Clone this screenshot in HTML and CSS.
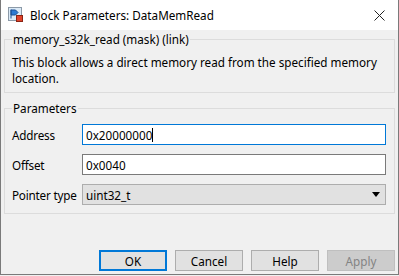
FILE: index.html
```html
<!DOCTYPE html>
<html lang="en">
<head>
    <meta charset="UTF-8">
    <title>Block Parameters: DataMemRead</title>
    <link rel="stylesheet" href="styles.css">
</head>
<body>
    <div class="window">
        <div class="title-bar">
            <svg class="app-icon" width="15" height="15" viewBox="0 0 15 15">
                <rect x="0.5" y="0.5" width="13" height="13" fill="#dbeaf7" stroke="#8c9aa8"/>
                <path d="M3 2.5 L3 11.5 M3 3 L7.5 3 L10 5.5 L7.5 8 L3 8 Z" fill="#2d7ad2" stroke="#1c4f91" stroke-width="1"/>
                <rect x="8.5" y="8.5" width="6" height="6" fill="#e0432b" stroke="#8a2414"/>
            </svg>
            <span class="title">Block Parameters: DataMemRead</span>
            <span class="close">
                <svg width="11" height="11" viewBox="0 0 11 11">
                    <path d="M0.5 0.5 L10.5 10.5 M10.5 0.5 L0.5 10.5" stroke="#222" stroke-width="1"/>
                </svg>
            </span>
        </div>
        <div class="content">
            <fieldset class="group">
                <legend>memory_s32k_read (mask) (link)</legend>
                <p class="description">This block allows a direct memory read from the specified memory location.</p>
            </fieldset>
            <fieldset class="group params">
                <legend>Parameters</legend>
                <div class="param-row">
                    <label>Address</label>
                    <div class="field focused">0x20000000<span class="caret"></span></div>
                </div>
                <div class="param-row">
                    <label>Offset</label>
                    <div class="field">0x0040</div>
                </div>
                <div class="param-row">
                    <label>Pointer type</label>
                    <div class="field select">
                        <span>uint32_t</span>
                        <svg width="8" height="5" viewBox="0 0 8 5"><path d="M0 0 L8 0 L4 5 Z" fill="#000"/></svg>
                    </div>
                </div>
            </fieldset>
            <div class="buttons">
                <button class="default">OK</button>
                <button>Cancel</button>
                <button>Help</button>
                <button class="disabled">Apply</button>
            </div>
        </div>
    </div>
</body>
</html>
```

FILE: styles.css
```css
* {
    margin: 0;
    padding: 0;
    box-sizing: border-box;
}

body {
    font-family: "Noto Sans", "Liberation Sans", sans-serif;
    font-size: 11.7px;
    color: #000;
    background: #f0f0f0;
}

.window {
    width: 399px;
    height: 275px;
    display: flex;
    flex-direction: column;
    border-left: 1px solid #7a7a7a;
    border-right: 1px solid #7a7a7a;
    border-bottom: 1px solid #7a7a7a;
}

.title-bar {
    height: 30px;
    background: #fff;
    display: flex;
    align-items: center;
    padding-left: 7px;
}

.app-icon {
    margin-right: 7px;
    margin-top: -1px;
}

.title {
    flex: 1;
}

.close {
    width: 30px;
    display: flex;
    justify-content: center;
    margin-right: 4px;
}

.content {
    flex: 1;
    display: flex;
    flex-direction: column;
    padding: 0 3px 3px 3px;
}

.group {
    border: 1px solid #dcdcdc;
    margin-top: 1px;
    padding: 7px 8px 6px 7px;
}

.group legend {
    padding: 0 1px;
    line-height: 16px;
}

.description {
    line-height: 16px;
}

.params {
    margin-top: 7px;
    padding-top: 8px;
    padding-bottom: 8px;
    display: flex;
    flex-direction: column;
    gap: 9px;
}

.param-row {
    display: flex;
    align-items: center;
}

.param-row label {
    width: 70px;
    flex-shrink: 0;
    white-space: nowrap;
    letter-spacing: -0.2px;
}

.field {
    flex: 1;
    height: 21px;
    border: 1px solid #7a7a7a;
    background: #fff;
    padding: 0 3px;
    display: flex;
    align-items: center;
}

.field.focused {
    border-color: #0078d7;
}

.caret {
    width: 1px;
    height: 14px;
    background: #000;
}

.field.select {
    background: #e1e1e1;
    border-color: #adadad;
    justify-content: space-between;
    padding-right: 5px;
}

.buttons {
    margin-top: auto;
    display: flex;
    justify-content: flex-end;
    gap: 8px;
}

.buttons button {
    width: 68px;
    height: 21px;
    font-family: inherit;
    font-size: 11.7px;
    color: #000;
    background: #e1e1e1;
    border: 1px solid #adadad;
}

.buttons button.default {
    border: 2px solid #0078d7;
}

.buttons button.disabled {
    background: #cccccc;
    border-color: #bfbfbf;
    color: #838383;
}
```
